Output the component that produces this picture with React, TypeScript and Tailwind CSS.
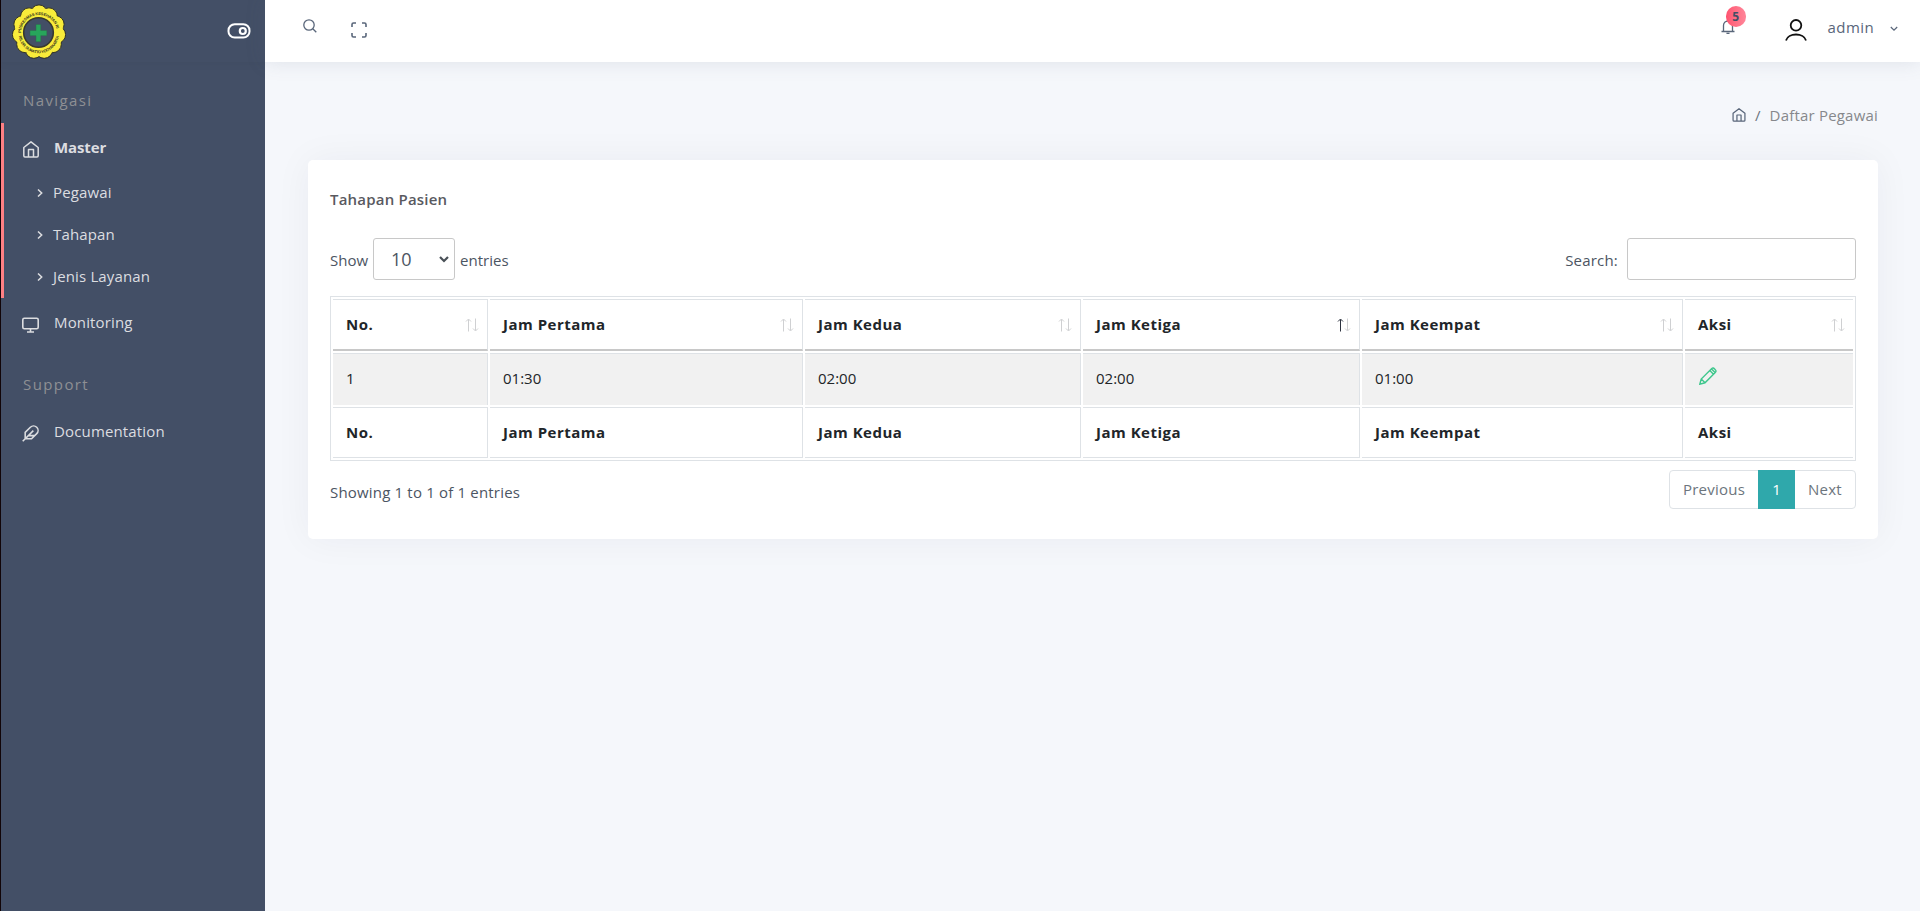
import React from 'react';

const navItems = ['Pegawai', 'Tahapan', 'Jenis Layanan'];
const columns = ['No.', 'Jam Pertama', 'Jam Kedua', 'Jam Ketiga', 'Jam Keempat', 'Aksi'];
const values = ['1', '01:30', '02:00', '02:00', '01:00'];

function Logo() {
  const petals = Array.from({ length: 11 }, (_, i) => (i * 2 * Math.PI) / 11 - Math.PI / 2);
  return (
    <svg viewBox="0 0 54 56" className="mt-px h-14 w-[54px]">
      {petals.map((a, i) => (
        <circle key={i} cx={27 + 18.3 * Math.cos(a)} cy={28 + 18.6 * Math.sin(a)} r="8.500" fill="#f9ec3a" stroke="#2f3026" strokeWidth="1" />
      ))}
      <circle cx="27" cy="28" r="24.200" fill="#f9ec3a" />
      <circle cx="26.5" cy="28.500" r="14.800" fill="#434f66" stroke="#38392f" strokeWidth="1.6" />
      <path d="M24 20.500h4.800v6h6v5.200h-6v6H24v-6h-6v-5.200h6z" fill="#27a55b" stroke="#2f6b4f" strokeWidth=".5" />
      <defs>
        <path id="logo-top" d="M9 29a18 18 0 0 1 36 0" />
        <path id="logo-bottom" d="M6.500 29a20.300 20.300 0 0 0 40.600 0" />
      </defs>
      <g fill="#33331c" fontFamily="Liberation Sans, sans-serif" fontWeight="700" fontSize="4">
        <text><textPath href="#logo-top" textLength="52">PUSKESMAS KESEHATAN RI</textPath></text>
        <text><textPath href="#logo-bottom" startOffset="3" textLength="57">RS. DR. SURATTO YOGYAKARTA</textPath></text>
      </g>
    </svg>
  );
}

function HomeIcon({ className }: { className: string }) {
  return (
    <svg viewBox="0 0 16 17" fill="none" stroke="currentColor" className={className}>
      <path d="M.8 6.500 8 .8l7.200 5.700v8.300a1.200 1.200 0 0 1-1.200 1.200H2A1.200 1.200 0 0 1 .8 14.800zM5.500 16V8.500h5V16" strokeWidth="1.500" strokeLinejoin="round" />
    </svg>
  );
}

function SortArrows({ active }: { active: boolean }) {
  return (
    <svg viewBox="0 0 14 14" className="mt-px h-3.5 w-3.5" fill="none">
      <path d="M3.500 13.500v-12M1 3.500l2.500-2.500L6 3.500" stroke={active ? '#2c323f' : '#cfd0d2'} />
      <path d="M10.500.5v12M8 10.500l2.500 2.500 2.500-2.500" stroke="#cfd0d2" />
    </svg>
  );
}

function Sidebar() {
  return (
    <aside className="flex w-[265px] shrink-0 flex-col border-l border-[#110508] bg-[#434f66] text-[15px] text-[#dcdde0]">
      <div className="flex h-[62px] items-center justify-between pl-[11px] pr-[14px] shadow-[0_0_10px_rgba(0,0,0,0.06)]">
        <Logo />
        <svg viewBox="0 0 24 16" className="h-4 w-6" fill="none" stroke="#fff">
          <rect x="1.500" y="1.200" width="21" height="13.400" rx="6.200" strokeWidth="2" />
          <circle cx="15.800" cy="8" r="3" strokeWidth="2.200" />
        </svg>
      </div>
      <p className="mt-[26px] h-[24px] pl-[22px] leading-6 tracking-[1.4px] text-[#8e8f94]">Navigasi</p>
      <div className="mt-[11px] h-[175px] border-l-[3px] border-[#ff8084] pl-[19px]">
        <div className="flex h-[49px] items-center gap-[15px]">
          <HomeIcon className="mt-1 h-[17px] w-4" />
          <span className="font-bold tracking-[-0.1px]">Master</span>
        </div>
        <ul>
          {navItems.map((n) => (
            <li key={n} className="flex h-[42px] items-center gap-[10px] pb-[2px] pl-[14px] font-medium tracking-[0.15px]">
              <svg viewBox="0 0 6 8" className="mt-px h-2 w-[6px]" fill="none" stroke="currentColor" strokeWidth="1.500"><path d="m1 .5 3.700 3.500L1 7.500" /></svg>
              {n}
            </li>
          ))}
        </ul>
      </div>
      <div className="flex h-[49px] items-center gap-[15px] pl-[21px]">
        <svg viewBox="0 0 17 16" className="mt-1 h-4 w-[17px]" fill="none" stroke="currentColor" strokeWidth="1.600"><rect x=".8" y="1.200" width="15.400" height="10.600" rx="1.500" /><path d="M8.500 12v3M5 15h7" /></svg>
        <span className="font-medium tracking-[0.15px]">Monitoring</span>
      </div>
      <p className="mt-[25px] pl-[22px] leading-6 tracking-[1.4px] text-[#8e8f94]">Support</p>
      <div className="mt-[11px] flex h-[49px] items-center gap-[15px] pl-[21px]">
        <svg viewBox="0 0 24 24" className="mt-1 h-[17px] w-[17px]" fill="none" stroke="currentColor" strokeWidth="2.200"><path d="M20.800 12.200a6.300 6.300 0 0 0-9-9L4.500 10.500V19.500h9zM16 8 1 23M17.500 15H9" /></svg>
        <span className="font-medium tracking-[0.15px]">Documentation</span>
      </div>
    </aside>
  );
}

function Topbar() {
  return (
    <header className="relative flex h-[62px] items-center justify-between bg-white pl-[38px] pr-[22px] shadow-[0_0_20px_rgba(89,102,122,0.15)]">
      <div className="flex items-center text-[#59667a]">
        <svg viewBox="0 0 14 14" className="mb-[10px] h-[14px] w-[14px]" fill="none" stroke="currentColor" strokeWidth="1.300"><circle cx="6" cy="6" r="5.200" /><path d="m9.800 9.800 3.500 3.500" /></svg>
        <svg viewBox="0 0 16 16" className="mb-[2px] ml-[34px] h-4 w-4" fill="none" stroke="currentColor" strokeWidth="1.600"><path d="M1 5V2.500A1.500 1.500 0 0 1 2.500 1H5M11 1h2.500A1.500 1.500 0 0 1 15 2.500V5M15 11v2.500a1.500 1.500 0 0 1-1.500 1.500H11M5 15H2.500A1.500 1.500 0 0 1 1 13.500V11" /></svg>
      </div>
      <div className="flex items-center text-[#59667a]">
        <div className="relative mr-[50px]">
          <svg viewBox="0 0 14 14" className="mt-[-8px] h-[14px] w-[14px]" fill="none" stroke="currentColor" strokeWidth="1.300"><path d="M.5 11.500h13M2.500 11.500V5.500a4.500 4.500 0 0 1 9 0v6M5.500 13q1.500 1 3 0" /></svg>
          <span className="absolute -top-[22px] left-[5px] flex h-[21px] w-5 items-center justify-center rounded-full bg-gradient-to-r from-[#ff5370] to-[#ff869a] text-[12px] font-bold text-[#434f66]">5</span>
        </div>
        <svg viewBox="0 0 22 22" className="mb-[3px] h-[22px] w-[22px]" fill="none" stroke="#111" strokeWidth="1.800"><circle cx="11" cy="6.300" r="5.300" /><path d="M1 21.500c2-8 18-8 20 0" /></svg>
        <span className="mb-[7px] ml-[21px] text-[15px] tracking-[0.4px]">admin</span>
        <svg viewBox="0 0 8 6" className="mt-[-4px] ml-4 h-[6px] w-2" fill="none" stroke="currentColor" strokeWidth="1.200"><path d="m.8 1 3.200 3.200L7.200 1" /></svg>
      </div>
    </header>
  );
}

function DataTable() {
  const cell = 'border-t border-[#dee2e6] pl-[13px]';
  return (
    <table className="mt-4 w-[1526px] table-fixed border-separate border-spacing-[2px] border border-[#dee2e6] text-left text-[15px]">
      <colgroup>
        <col className="w-[155px]" /><col className="w-[313px]" /><col className="w-[276px]" /><col className="w-[277px]" /><col className="w-[321px]" /><col className="w-[168px]" />
      </colgroup>
      <thead>
        <tr>
          {columns.map((c, i) => (
            <th key={c} className={`${cell} h-[52px] border-b-2 border-b-[#c8c8c8] py-0 pr-2 font-bold tracking-[0.5px] text-[#212529] ${i < 5 ? 'border-r' : ''}`}>
              <div className="flex items-center justify-between"><span>{c}</span><SortArrows active={i === 3} /></div>
            </th>
          ))}
        </tr>
      </thead>
      <tbody>
        <tr>
          {values.map((v, i) => <td key={i} className={`${cell} h-[52px] border-r bg-[#f1f1f1] pt-0 pb-[2px] text-[#212529]`}>{v}</td>)}
          <td className={`${cell} h-[52px] bg-[#f1f1f1] py-0`}>
            <svg viewBox="0 0 18 18" className="mb-[8px] ml-[1px] h-[18px] w-[18px]" fill="none" stroke="#3fc78d" strokeWidth="1.400"><path d="M.8 17.200 2.200 12 12.800 1.500q1.200-1.200 2.800.4l.5.500q1.600 1.600.4 2.800L6 15.800zM2.200 12 6 15.800M10.800 3.500l3.700 3.700M12.500 1.900l3.600 3.600" /></svg>
          </td>
        </tr>
      </tbody>
      <tfoot>
        <tr>
          {columns.map((c, i) => <th key={c} className={`${cell} h-[51px] border-b py-0 font-bold tracking-[0.5px] text-[#212529] ${i < 5 ? 'border-r' : ''}`}>{c}</th>)}
        </tr>
      </tfoot>
    </table>
  );
}

export default function App() {
  return (
    <div className="flex h-[911px] w-[1920px] overflow-hidden bg-[#f5f7fb] font-['Open_Sans',sans-serif] text-[#59667a]">
      <Sidebar />
      <div className="flex flex-1 flex-col">
        <Topbar />
        <main className="pr-[42px] pl-[43px]">
          <div className="flex h-[98px] items-center justify-end pt-2 text-[15px]">
            <HomeIcon className="h-[14px] w-[14px] text-[#59667a]" />
            <span className="mx-[9px] text-[#6c757d]">/</span>
            <span className="tracking-[0.2px] text-[#86888c]">Daftar Pegawai</span>
          </div>
          <section className="h-[379px] rounded-[5px] bg-white px-[22px] shadow-[0_0_37px_rgba(8,21,66,0.05)]">
            <h5 className="pt-[27px] text-[15px] font-semibold leading-6 tracking-[0.2px] text-[#59595f]">Tahapan Pasien</h5>
            <div className="mt-[27px] flex h-[42px] items-center justify-between text-[15px] text-[#4c5563]">
              <div className="flex items-center">
                <span className="pt-[2px]">Show</span>
                <div className="mx-[5px] flex h-[42px] w-[82px] items-center justify-between rounded-[3px] border border-[#c8c8c8] pl-[17px] pr-[5px] text-[18px]">
                  10
                  <svg viewBox="0 0 10 7" className="h-[7px] w-[10px]" fill="none" stroke="#495057" strokeWidth="2.200"><path d="m1 1 4 4 4-4" /></svg>
                </div>
                <span className="pt-[2px]">entries</span>
              </div>
              <div className="flex items-center">
                <span className="pt-[2px] tracking-[0.2px]">Search:</span>
                <input aria-label="Search" className="ml-[9px] h-[42px] w-[229px] rounded-[3px] border border-[#c8c8c8]" />
              </div>
            </div>
            <DataTable />
            <div className="flex justify-between pt-[9px] text-[15px]">
              <p className="pt-[10px] leading-6 tracking-[0.18px] text-[#4c5563]">Showing 1 to 1 of 1 entries</p>
              <nav className="flex h-[39px] items-center rounded-[4px] border border-[#dee2e6] text-[#6c757d]">
                <span className="w-[88px] text-center tracking-[0.25px]">Previous</span>
                <span className="flex h-[39px] w-[37px] items-center justify-center bg-[#2fa8ab] text-white">1</span>
                <span className="w-[60px] text-center tracking-[0.25px]">Next</span>
              </nav>
            </div>
          </section>
        </main>
      </div>
    </div>
  );
}
